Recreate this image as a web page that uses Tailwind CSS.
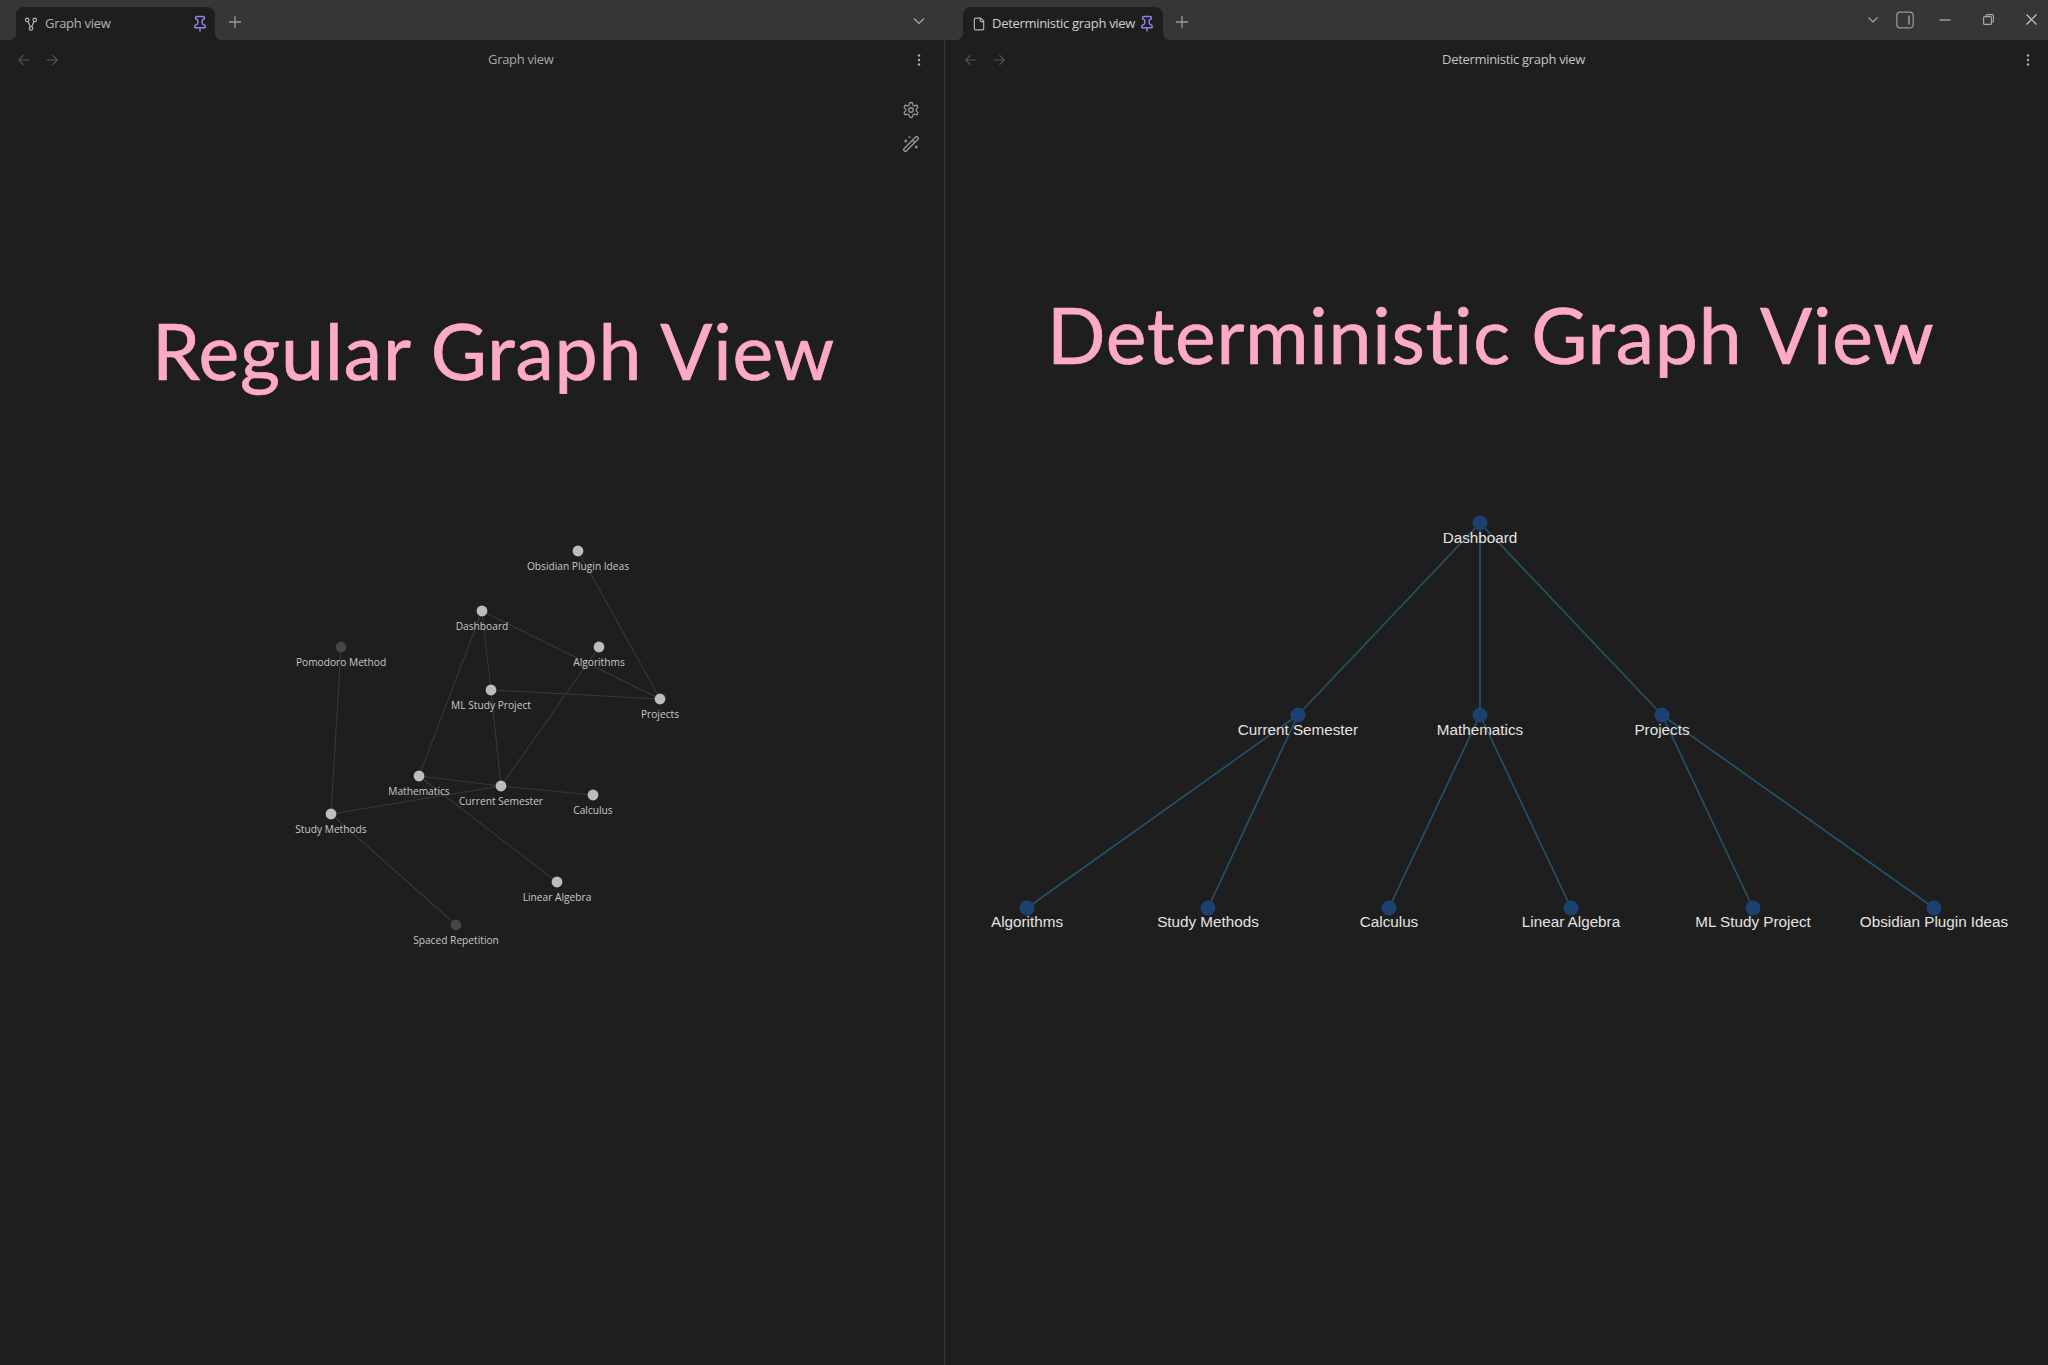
<!DOCTYPE html>
<html lang="en">

<head>
    <meta charset="UTF-8">
    <title>Graph view</title>
    <script src="https://cdn.jsdelivr.net/npm/@tailwindcss/browser@4"></script>
</head>

<body class="bg-[#1e1e1e] font-['Open_Sans',sans-serif] overflow-hidden">

    <div class="flex w-[2048px] h-[1365px]">

        <!-- Left pane -->
        <section class="w-[945px] border-r border-[#363636] flex flex-col">
            <div class="h-10 bg-[#363636] flex items-end pl-4 relative">
                <div class="relative w-[199px] h-[33px] bg-[#1e1e1e] rounded-t-lg flex items-center pl-[8px] pr-[6px] text-[13px] text-[#b3b3b3]">
                    <span class="absolute -left-[6px] bottom-0 w-[6px] h-[6px] bg-[radial-gradient(circle_at_0_0,transparent_5.5px,#1e1e1e_6px)]"></span>
                    <span class="absolute -right-[6px] bottom-0 w-[6px] h-[6px] bg-[radial-gradient(circle_at_100%_0,transparent_5.5px,#1e1e1e_6px)]"></span>
                    <svg class="w-[14px] h-[14px] mr-[7px]" viewBox="0 0 24 24" fill="none" stroke="#b3b3b3" stroke-width="2"><circle cx="5.5" cy="5" r="3"/><circle cx="18.5" cy="5" r="3"/><circle cx="12" cy="19.5" r="3"/><path d="M7 8l4 9M17 8l-4 9"/></svg>
                    <span class="tracking-[-0.3px]">Graph view</span>
                    <svg class="w-[18px] h-[18px] ml-auto" viewBox="0 0 24 24" fill="none" stroke="#8f85e0" stroke-width="2"><path d="M12 17v5"/><path d="M9 10.76a2 2 0 0 1-1.11 1.79l-1.78.9A2 2 0 0 0 5 15.24V16a1 1 0 0 0 1 1h12a1 1 0 0 0 1-1v-.76a2 2 0 0 0-1.11-1.79l-1.78-.9A2 2 0 0 1 15 10.76V7a1 1 0 0 1 1-1 2 2 0 0 0 0-4H8a2 2 0 0 0 0 4 1 1 0 0 1 1 1z"/></svg>
                </div>
                <svg class="w-[14px] h-[14px] ml-[13px] mb-[11px]" viewBox="0 0 14 14" fill="none" stroke="#999" stroke-width="1.3"><path d="M7 1v12M1 7h12"/></svg>
                <svg class="w-3 h-3 absolute left-[913px] top-[15px]" viewBox="0 0 12 12" fill="none" stroke="#aaa" stroke-width="1.2"><path d="M1 3.5l5 5 5-5"/></svg>
            </div>
            <div class="h-[38px] flex items-center pl-[18px] pr-[23px] pt-[2px] text-[13px] text-[#a8a8a8]">
                <div class="w-[470px] flex items-center gap-4">
                    <svg class="w-3 h-3" viewBox="0 0 12 12" fill="none" stroke="#555" stroke-width="1.1"><path d="M11.5 6H.8M5.5 1.2 .8 6l4.7 4.8"/></svg>
                    <svg class="w-3 h-3" viewBox="0 0 12 12" fill="none" stroke="#555" stroke-width="1.1"><path d="M.5 6h10.7M6.5 1.2 11.2 6l-4.7 4.8"/></svg>
                </div>
                <span class="tracking-[-0.3px]">Graph view</span>
                <svg class="w-[4px] h-[14px] ml-auto" viewBox="0 0 4 14" fill="#b0b0b0"><circle cx="2" cy="2.5" r="1.2"/><circle cx="2" cy="7" r="1.2"/><circle cx="2" cy="11.5" r="1.2"/></svg>
            </div>
            <div class="relative flex-1 pl-[152px] pt-[222px]">
                <h1 class="font-['Lato',sans-serif] text-[77px] leading-[100px] tracking-[0.85px] text-[#fdaac8] [-webkit-text-stroke:0.7px_#fdaac8]">Regular Graph View</h1>

                <!-- graph controls -->
                <div class="absolute right-[24px] top-[23px] flex flex-col gap-4">
                    <svg class="w-[18px] h-[18px]" viewBox="0 0 24 24" fill="none" stroke="#999" stroke-width="1.7"><path d="M12.22 2h-.44a2 2 0 0 0-2 2v.18a2 2 0 0 1-1 1.73l-.43.25a2 2 0 0 1-2 0l-.15-.08a2 2 0 0 0-2.73.73l-.22.38a2 2 0 0 0 .73 2.73l.15.1a2 2 0 0 1 1 1.72v.51a2 2 0 0 1-1 1.74l-.15.09a2 2 0 0 0-.73 2.73l.22.38a2 2 0 0 0 2.73.73l.15-.08a2 2 0 0 1 2 0l.43.25a2 2 0 0 1 1 1.73V20a2 2 0 0 0 2 2h.44a2 2 0 0 0 2-2v-.18a2 2 0 0 1 1-1.73l.43-.25a2 2 0 0 1 2 0l.15.08a2 2 0 0 0 2.73-.73l.22-.39a2 2 0 0 0-.73-2.73l-.15-.08a2 2 0 0 1-1-1.74v-.5a2 2 0 0 1 1-1.74l.15-.09a2 2 0 0 0 .73-2.73l-.22-.38a2 2 0 0 0-2.73-.73l-.15.08a2 2 0 0 1-2 0l-.43-.25a2 2 0 0 1-1-1.73V4a2 2 0 0 0-2-2z"/><circle cx="12" cy="12" r="3"/></svg>
                    <svg class="w-[18px] h-[18px]" viewBox="0 0 24 24" fill="none" stroke="#999" stroke-width="1.7"><path d="m21.64 3.64-1.28-1.28a1.21 1.21 0 0 0-1.72 0L2.36 18.64a1.21 1.21 0 0 0 0 1.72l1.28 1.28a1.2 1.2 0 0 0 1.72 0L21.64 5.36a1.2 1.2 0 0 0 0-1.72"/><path d="m14 7 3 3"/><path d="M5 6v4"/><path d="M19 14v4"/><path d="M10 2v2"/><path d="M7 8H3"/><path d="M21 16h-4"/><path d="M11 3H9"/></svg>
                </div>

                <!-- regular graph: force layout, node places are the content -->
                <svg class="absolute inset-0 w-full h-full" viewBox="0 78 944 1287" font-family="Open Sans" font-size="10.2" fill="#c8c8c8" text-anchor="middle">
                    <g stroke="#383838" stroke-width="1.1">
                        <line x1="578" y1="551" x2="660" y2="699"/>
                        <line x1="482" y1="611" x2="660" y2="699"/>
                        <line x1="482" y1="611" x2="491" y2="690"/>
                        <line x1="482" y1="611" x2="419" y2="776"/>
                        <line x1="599" y1="647" x2="501" y2="786"/>
                        <line x1="491" y1="690" x2="660" y2="699"/>
                        <line x1="491" y1="690" x2="501" y2="786"/>
                        <line x1="419" y1="776" x2="501" y2="786"/>
                        <line x1="419" y1="776" x2="557" y2="882"/>
                        <line x1="501" y1="786" x2="593" y2="795"/>
                        <line x1="501" y1="786" x2="331" y2="814"/>
                        <line x1="341" y1="647" x2="331" y2="814"/>
                        <line x1="331" y1="814" x2="456" y2="925"/>
                    </g>
                    <g fill="#bdbdbd">
                        <circle cx="578" cy="551" r="5.4"/>
                        <circle cx="482" cy="611" r="5.4"/>
                        <circle cx="599" cy="647" r="5.4"/>
                        <circle cx="491" cy="690" r="5.4"/>
                        <circle cx="660" cy="699" r="5.4"/>
                        <circle cx="419" cy="776" r="5.4"/>
                        <circle cx="501" cy="786" r="5.4"/>
                        <circle cx="593" cy="795" r="5.4"/>
                        <circle cx="331" cy="814" r="5.4"/>
                        <circle cx="557" cy="882" r="5.4"/>
                    </g>
                    <g fill="#454545">
                        <circle cx="341" cy="647" r="5.4"/>
                        <circle cx="456" cy="925" r="5.4"/>
                    </g>
                    <text x="578" y="570">Obsidian Plugin Ideas</text>
                    <text x="482" y="630">Dashboard</text>
                    <text x="599" y="666">Algorithms</text>
                    <text x="491" y="709">ML Study Project</text>
                    <text x="660" y="718">Projects</text>
                    <text x="341" y="666">Pomodoro Method</text>
                    <text x="419" y="795">Mathematics</text>
                    <text x="501" y="805">Current Semester</text>
                    <text x="593" y="814">Calculus</text>
                    <text x="331" y="833">Study Methods</text>
                    <text x="557" y="901">Linear Algebra</text>
                    <text x="456" y="944">Spaced Repetition</text>
                </svg>
            </div>
        </section>

        <!-- Right pane -->
        <section class="flex-1 flex flex-col">
            <div class="h-10 bg-[#363636] flex items-end pl-[18px] relative">
                <div class="relative w-[200px] h-[33px] bg-[#1e1e1e] rounded-t-lg flex items-center pl-[9px] pr-[7px] text-[13px] text-[#d0d0d0]">
                    <span class="absolute -left-[6px] bottom-0 w-[6px] h-[6px] bg-[radial-gradient(circle_at_0_0,transparent_5.5px,#1e1e1e_6px)]"></span>
                    <span class="absolute -right-[6px] bottom-0 w-[6px] h-[6px] bg-[radial-gradient(circle_at_100%_0,transparent_5.5px,#1e1e1e_6px)]"></span>
                    <svg class="w-[14px] h-[14px] mr-[6px]" viewBox="0 0 24 24" fill="none" stroke="#b3b3b3" stroke-width="2"><path d="M15 2H6a2 2 0 0 0-2 2v16a2 2 0 0 0 2 2h12a2 2 0 0 0 2-2V7Z"/><path d="M14 2v4a2 2 0 0 0 2 2h4"/></svg>
                    <span class="tracking-[-0.3px]">Deterministic graph view</span>
                    <svg class="w-[18px] h-[18px] ml-auto" viewBox="0 0 24 24" fill="none" stroke="#8f85e0" stroke-width="2"><path d="M12 17v5"/><path d="M9 10.76a2 2 0 0 1-1.11 1.79l-1.78.9A2 2 0 0 0 5 15.24V16a1 1 0 0 0 1 1h12a1 1 0 0 0 1-1v-.76a2 2 0 0 0-1.11-1.79l-1.78-.9A2 2 0 0 1 15 10.76V7a1 1 0 0 1 1-1 2 2 0 0 0 0-4H8a2 2 0 0 0 0 4 1 1 0 0 1 1 1z"/></svg>
                </div>
                <svg class="w-[14px] h-[14px] ml-[12px] mb-[11px]" viewBox="0 0 14 14" fill="none" stroke="#999" stroke-width="1.3"><path d="M7 1v12M1 7h12"/></svg>

                <!-- window controls -->
                <div class="ml-auto self-stretch flex items-center pb-[1px] text-[#bbb]">
                    <svg class="w-3 h-3 mr-[17px]" viewBox="0 0 12 12" fill="none" stroke="#aaa" stroke-width="1.2"><path d="M1.5 3.5 6 8l4.5-4.5"/></svg>
                    <svg class="w-[18px] h-[18px] mr-[25px]" viewBox="0 0 18 18" fill="none" stroke="#9a9a9a" stroke-width="1.2"><rect x=".8" y="1.2" width="16.4" height="15.6" rx="3.4"/><path d="M13 4.5v9" stroke-width="1.6"/></svg>
                    <svg class="w-[12px] h-[12px] mr-[32px]" viewBox="0 0 12 12" fill="none" stroke="#aaa" stroke-width="1.3"><path d="M.5 6h11"/></svg>
                    <svg class="w-[11px] h-[11px] mr-[32px]" viewBox="0 0 11 11" fill="none" stroke="#aaa" stroke-width="1.1"><rect x=".6" y="2.6" width="7.8" height="7.8" rx="1"/><path d="M3 2.4v-.8a1 1 0 0 1 1-1h5.4a1 1 0 0 1 1 1V7a1 1 0 0 1-1 1h-.8"/></svg>
                    <svg class="w-[11px] h-[11px] mr-[11px]" viewBox="0 0 11 11" fill="none" stroke="#ccc" stroke-width="1.2"><path d="M.5.5l10 10M10.5.5l-10 10"/></svg>
                </div>
            </div>
            <div class="h-[38px] flex items-center pl-5 pr-[18px] pt-[2px] text-[13px] text-[#c4c4c4]">
                <div class="w-[477px] flex items-center gap-4">
                    <svg class="w-3 h-3" viewBox="0 0 12 12" fill="none" stroke="#555" stroke-width="1.1"><path d="M11.5 6H.8M5.5 1.2 .8 6l4.7 4.8"/></svg>
                    <svg class="w-3 h-3" viewBox="0 0 12 12" fill="none" stroke="#555" stroke-width="1.1"><path d="M.5 6h10.7M6.5 1.2 11.2 6l-4.7 4.8"/></svg>
                </div>
                <span class="tracking-[-0.3px]">Deterministic graph view</span>
                <svg class="w-[4px] h-[14px] ml-auto" viewBox="0 0 4 14" fill="#b0b0b0"><circle cx="2" cy="2.5" r="1.2"/><circle cx="2" cy="7" r="1.2"/><circle cx="2" cy="11.5" r="1.2"/></svg>
            </div>
            <div class="relative flex-1 pl-[102px] pt-[206px]">
                <h1 class="font-['Lato',sans-serif] text-[77px] leading-[100px] tracking-[0.75px] text-[#fdaac8] [-webkit-text-stroke:0.7px_#fdaac8]">Deterministic Graph View</h1>

                <!-- deterministic graph: tree layout -->
                <svg class="absolute inset-0 w-full h-full" viewBox="945 78 1103 1287" font-family="Liberation Sans" font-size="15.25" fill="#e4e4e4" text-anchor="middle">
                    <g stroke="#24536b" stroke-width="1.6">
                        <line x1="1480" y1="523" x2="1298" y2="715"/>
                        <line x1="1480" y1="523" x2="1480" y2="715"/>
                        <line x1="1480" y1="523" x2="1662" y2="715"/>
                        <line x1="1298" y1="715" x2="1027" y2="908"/>
                        <line x1="1298" y1="715" x2="1208" y2="908"/>
                        <line x1="1480" y1="715" x2="1389" y2="908"/>
                        <line x1="1480" y1="715" x2="1571" y2="908"/>
                        <line x1="1662" y1="715" x2="1753" y2="908"/>
                        <line x1="1662" y1="715" x2="1934" y2="908"/>
                    </g>
                    <g fill="#1c4170">
                        <circle cx="1480" cy="523" r="7.5"/>
                        <circle cx="1298" cy="715" r="7.5"/>
                        <circle cx="1480" cy="715" r="7.5"/>
                        <circle cx="1662" cy="715" r="7.5"/>
                        <circle cx="1027" cy="908" r="7.5"/>
                        <circle cx="1208" cy="908" r="7.5"/>
                        <circle cx="1389" cy="908" r="7.5"/>
                        <circle cx="1571" cy="908" r="7.5"/>
                        <circle cx="1753" cy="908" r="7.5"/>
                        <circle cx="1934" cy="908" r="7.5"/>
                    </g>
                    <text x="1480" y="543">Dashboard</text>
                    <text x="1298" y="735">Current Semester</text>
                    <text x="1480" y="735">Mathematics</text>
                    <text x="1662" y="735">Projects</text>
                    <text x="1027" y="927">Algorithms</text>
                    <text x="1208" y="927">Study Methods</text>
                    <text x="1389" y="927">Calculus</text>
                    <text x="1571" y="927">Linear Algebra</text>
                    <text x="1753" y="927">ML Study Project</text>
                    <text x="1934" y="927">Obsidian Plugin Ideas</text>
                </svg>
            </div>
        </section>

    </div>

</body>

</html>
